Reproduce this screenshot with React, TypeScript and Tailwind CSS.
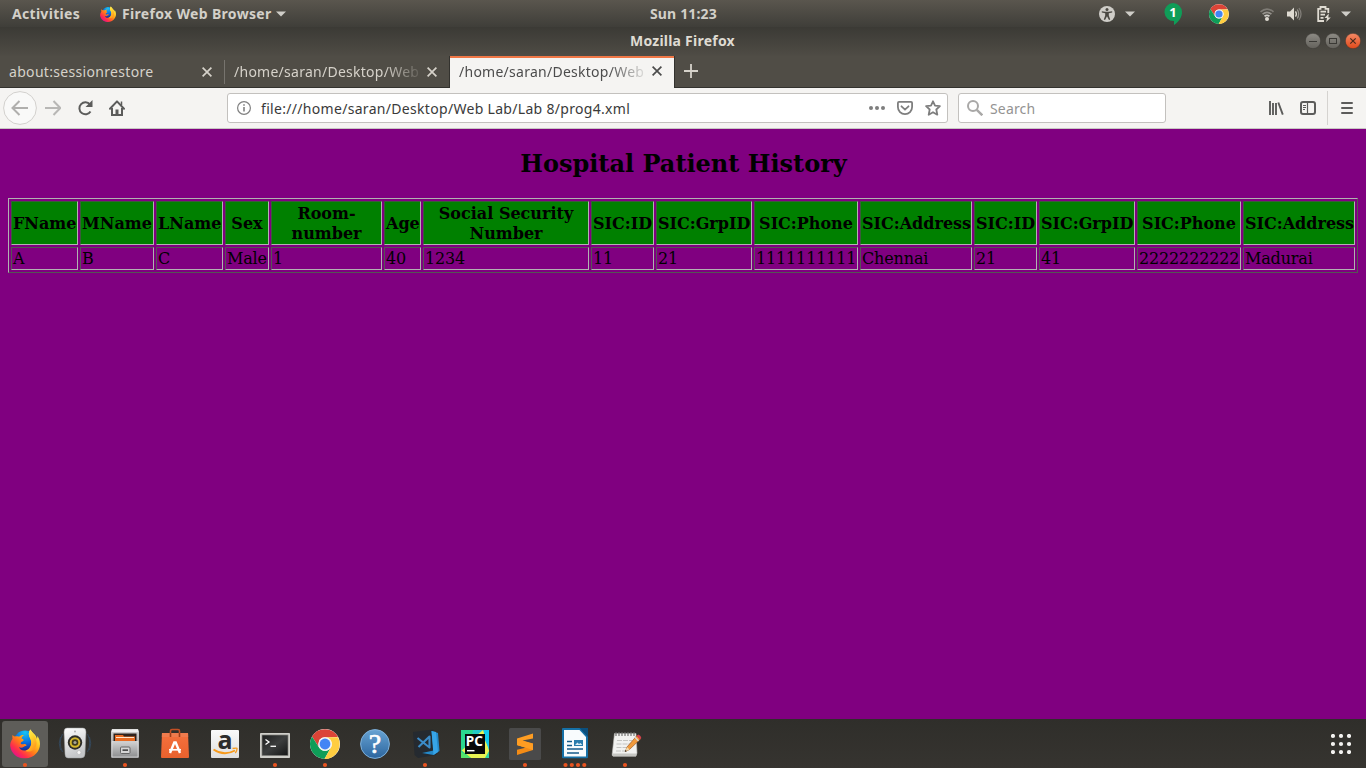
import React from "react";

type IconProps = { className?: string };

const UI = "font-['Noto_Sans','Open_Sans',sans-serif]";

function FirefoxLogo({ className }: IconProps) {
  return (
    <svg viewBox="0 0 30 30" className={className}>
      <defs>
        <linearGradient id="fxBody" x1="0.85" y1="0.1" x2="0.15" y2="0.9">
          <stop offset="0" stopColor="#fff44f" />
          <stop offset="0.3" stopColor="#ffbd1c" />
          <stop offset="0.55" stopColor="#ff7a1a" />
          <stop offset="0.8" stopColor="#ff2f4a" />
          <stop offset="1" stopColor="#e3128a" />
        </linearGradient>
        <radialGradient id="fxGlobe" cx="0.5" cy="0.1" r="0.9">
          <stop offset="0" stopColor="#16c5f4" />
          <stop offset="0.5" stopColor="#0a6fe0" />
          <stop offset="1" stopColor="#20167c" />
        </radialGradient>
        <linearGradient id="fxTail" x1="0" y1="0" x2="0.5" y2="1">
          <stop offset="0" stopColor="#fff36b" />
          <stop offset="0.5" stopColor="#ffd52e" />
          <stop offset="1" stopColor="#ff9a1f" />
        </linearGradient>
      </defs>
      <circle cx="15" cy="13" r="11" fill="url(#fxGlobe)" />
      <path
        d="M2.6 6.2C2.2 7.6 2.2 9 2.5 10.2C1 12.500 0 15 .2 17.500C1 25 7.500 30.500 15.500 30C24 29.400 30 23 30 15.500C30 12 28.800 9 27.300 7.400C27.300 8.600 27.200 9.600 26.800 10.300C26.600 6.500 22.500 4.500 20.300 1C18.400 3.600 18.300 6.900 20 9.600C22.800 14.500 21 20.800 15.500 22C12 22.600 9.500 20.500 9.100 18.600C10.500 19.600 12.500 19.200 13.800 18.200C15 17.400 16 17.700 16.500 17.100C16.700 16.500 15.600 15.300 14.100 15.600C12.800 15.900 11.600 16.100 10.700 14.900C10.600 13.700 11.800 13.200 13.500 12.200C13.900 11 13 10.300 11.500 10C12 8 13 7.400 14.200 6.600C12.200 6.400 10.200 7 9.100 8.200C7.300 7.700 6.200 7.700 5 8.100C3.900 7.700 3 7.100 2.600 6.200Z"
        fill="url(#fxBody)"
      />
      <path
        d="M20.300 1C18.400 3.600 18.300 6.900 20 9.600C22.800 14.500 21 20.800 15.500 22.500C21 24.500 26 21 26.500 15C26.800 9 22.500 4.500 20.300 1Z"
        fill="url(#fxTail)"
      />
    </svg>
  );
}

function ChromeLogo({ className }: IconProps) {
  return (
    <svg viewBox="0 0 30 30" className={className}>
      <circle cx="15" cy="15" r="15" fill="#fff" />
      <path d="M2 7.500A15 15 0 0 1 28 8L21 8.300L15 8.200A6.800 6.800 0 0 0 9.100 11.600L8.500 17.500Z" fill="#db4437" />
      <path d="M2 7.500A15 15 0 0 0 14.500 30L20.900 18.400A6.800 6.800 0 0 1 9.100 18.400Z" fill="#0f9d58" />
      <path d="M28 8.200A15 15 0 0 1 14.500 30L20.900 18.400A6.800 6.800 0 0 0 15 8.200Z" fill="#ffcd40" />
      <circle cx="15" cy="15" r="6.800" fill="#f1f1f1" />
      <circle cx="15" cy="15" r="5.400" fill="#4285f4" />
    </svg>
  );
}

function Caret({ className }: IconProps) {
  return (
    <svg viewBox="0 0 10 6" className={className}>
      <path d="M0 .5H10L5 5.500Z" fill="#cfcdc8" />
    </svg>
  );
}

function TopBar() {
  return (
    <div className={`flex h-[27px] items-center bg-gradient-to-b from-[#5a564e] to-[#3f3e39] text-[14px] font-bold text-[#d3d0c9] ${UI}`}>
      <div className="ml-3 w-[88px] whitespace-nowrap tracking-[0.3px]">Activities</div>
      <FirefoxLogo className="h-4 w-4" />
      <div className="ml-[6px] w-[151px] whitespace-nowrap tracking-[0.33px]">Firefox Web Browser</div>
      <Caret className="ml-[3px] h-[6px] w-[10px]" />
      <div className="ml-[364px] w-[449px] whitespace-nowrap tracking-[0.15px]">Sun 11:23</div>
      <svg viewBox="0 0 16 16" className="h-4 w-4">
        <circle cx="8" cy="8" r="8" fill="#cfcdc8" />
        <circle cx="8" cy="3.500" r="1.500" fill="#4a4842" />
        <path d="M2.800 5.200L6.200 5.700H9.800L13.200 5.200V6.500L9.800 7.200V9.500L11.200 13.600L10 14L8 10.200L6 14L4.800 13.600L6.200 9.500V7.200L2.800 6.500Z" fill="#4a4842" />
      </svg>
      <Caret className="ml-[10px] h-[6px] w-[10px]" />
      <svg viewBox="0 0 18 22" className="ml-[29px] h-[22px] w-[18px]">
        <path d="M9 0A9 9 0 0 1 18 9C18 14.500 15 18.500 10 22V18A9 9 0 1 1 9 0Z" fill="#0f9d58" />
        <text x="9" y="13.500" textAnchor="middle" fontFamily="Noto Sans" fontSize="13" fontWeight="700" fill="#fff">1</text>
      </svg>
      <ChromeLogo className="ml-[27px] h-5 w-5" />
      <svg viewBox="0 0 16 16" className="ml-[30px] mt-px h-4 w-4" fill="none" strokeWidth="1.700">
        <path d="M1.500 5.800Q8 .3 14.500 5.800" stroke="#7e7b75" />
        <path d="M3.600 8.200Q8 4.500 12.400 8.200" stroke="#96938d" />
        <path d="M5.500 10.300Q8 8.400 10.500 10.300" stroke="#cfcdc8" />
        <circle cx="8" cy="13" r="2" fill="#dfdbd2" />
      </svg>
      <svg viewBox="0 0 16 16" className="ml-[11px] h-4 w-4" fill="none">
        <path d="M1 5.500H4L8 1.500V14.500L4 10.500H1Z" fill="#dfdbd2" />
        <path d="M9.500 5.300Q11.300 8 9.500 10.700" stroke="#dfdbd2" strokeWidth="1.300" />
        <path d="M11.300 3.500Q14 8 11.300 12.500" stroke="#96938d" strokeWidth="1.300" />
        <path d="M13 2Q17 8 13 14" stroke="#817e78" strokeWidth="1.300" />
      </svg>
      <svg viewBox="0 0 16 16" className="ml-[14px] h-4 w-4" fill="none" stroke="#dfdbd2" strokeWidth="1.800">
        <path d="M8 15H2.200V2.900H4.500V1H9.500V2.900H12.300V7" />
        <path d="M4.500 5.700H10M4.500 8.700H9M4.500 11.800H7.500" />
        <path d="M12.800 7.500L8.500 12H11L10.200 16L14.800 11.500H12.300Z" fill="#dfdbd2" stroke="none" />
      </svg>
      <Caret className="ml-[9px] h-[6px] w-[10px]" />
    </div>
  );
}

function TitleBar() {
  return (
    <div className={`flex h-[29px] bg-gradient-to-b from-[#3b3a35] to-[#4f4c45] text-[14px] font-bold text-[#dfdbd2] ${UI}`}>
      <div className="ml-[630px] w-[675px] whitespace-nowrap pt-1 leading-5 tracking-[0.23px]">Mozilla Firefox</div>
      <div className="flex gap-1 pt-[6px]">
        <svg viewBox="0 0 16 16" className="h-4 w-4">
          <defs>
            <linearGradient id="winGray" x2="0" y2="1">
              <stop stopColor="#8d8b85" />
              <stop offset="1" stopColor="#63615b" />
            </linearGradient>
            <linearGradient id="winRed" x2="0" y2="1">
              <stop stopColor="#f48a66" />
              <stop offset="1" stopColor="#e0491a" />
            </linearGradient>
          </defs>
          <circle cx="8" cy="8" r="7.700" fill="url(#winGray)" stroke="#34332f" strokeWidth=".5" />
          <path d="M4 8.500H12" stroke="#3a3935" />
        </svg>
        <svg viewBox="0 0 16 16" className="h-4 w-4">
          <circle cx="8" cy="8" r="7.700" fill="url(#winGray)" stroke="#34332f" strokeWidth=".5" />
          <rect x="4.500" y="5.500" width="7" height="5" fill="none" stroke="#3a3935" />
        </svg>
        <svg viewBox="0 0 16 16" className="h-4 w-4">
          <circle cx="8" cy="8" r="7.700" fill="url(#winRed)" stroke="#34332f" strokeWidth=".5" />
          <path d="M5.300 5.300L10.700 10.700M10.700 5.300L5.300 10.700" stroke="#4a2a1c" strokeWidth="1.200" />
        </svg>
      </div>
    </div>
  );
}

function CloseX({ className }: IconProps) {
  return (
    <svg viewBox="0 0 10 10" className={className} stroke="currentColor" strokeWidth="1.700" fill="none">
      <path d="M.6 .6L9.400 9.400M9.400 .6L.6 9.400" />
    </svg>
  );
}

function TabStrip() {
  return (
    <div className={`flex h-8 border-b border-[#33322e] bg-[#504d46] text-[14px] text-[#d6d2ca] ${UI}`}>
      <div className="flex w-[224px] items-center">
        <div className="ml-[9px] w-[193px] whitespace-nowrap tracking-[0.32px]">about:sessionrestore</div>
        <CloseX className="h-[10px] w-[10px]" />
      </div>
      <div className="mb-[3px] mt-1 w-px bg-[#77746e]" />
      <div className="flex w-[224px] items-center">
        <div className="ml-[9px] w-[193px] whitespace-nowrap tracking-[0.26px] [mask-image:linear-gradient(to_right,black_150px,transparent_191px)]">/home/saran/Desktop/Web</div>
        <CloseX className="h-[10px] w-[10px]" />
      </div>
      <div className="-mb-px flex w-[226px] items-center border-x border-[#33322e] bg-[#f5f4f2] pb-[2px] text-[#4c4c4c] shadow-[inset_0_2px_0_#f07746]">
        <div className="ml-[9px] w-[193px] whitespace-nowrap tracking-[0.26px] [mask-image:linear-gradient(to_right,black_150px,transparent_191px)]">/home/saran/Desktop/Web</div>
        <CloseX className="h-[10px] w-[10px]" />
      </div>
      <svg viewBox="0 0 14 14" className="ml-[9px] mt-2 h-[14px] w-[14px]" stroke="#d6d2ca" strokeWidth="1.800">
        <path d="M7 0V14M0 7H14" />
      </svg>
    </div>
  );
}

function Toolbar() {
  return (
    <div className={`flex h-[41px] items-center border-b border-[#c8c6c3] bg-[#f5f4f2] text-[14px] ${UI}`}>
      <svg viewBox="0 0 34 34" className="ml-[3px] h-[34px] w-[34px]" fill="none">
        <circle cx="17" cy="17" r="16.400" fill="#f9f9f8" stroke="#d2d0cd" />
        <path d="M25 17H10M16.500 10L9.500 17L16.500 24" stroke="#b0afad" strokeWidth="2" />
      </svg>
      <svg viewBox="0 0 16 16" className="ml-2 h-4 w-4" fill="none" stroke="#b8b7b5" strokeWidth="2">
        <path d="M0 8H15M8.500 1L15.300 8L8.500 15" />
      </svg>
      <svg viewBox="0 0 16 16" className="ml-4 h-4 w-4" fill="none" stroke="#5c5c5b" strokeWidth="2">
        <path d="M13.500 11.500A6 6 0 1 1 13 4.500" />
        <path d="M15.500 0V7H8.500Z" fill="#5c5c5b" stroke="none" />
      </svg>
      <svg viewBox="0 0 16 16" className="ml-4 h-4 w-4" fill="none" stroke="#5c5c5b" strokeWidth="2">
        <path d="M1 8.700L8 1.400L15 8.700" strokeLinejoin="round" strokeLinecap="round" />
        <path d="M3 8V14.900H13V8" />
        <path d="M8 14V9.500" strokeWidth="3" />
        <path d="M12.500 1.500V5" strokeWidth="1.500" />
      </svg>

      <div className="ml-[102px] flex h-[30px] w-[721px] items-center rounded-[3px] border border-[#c3c1be] bg-white">
        <svg viewBox="0 0 14 14" className="ml-[9px] h-[14px] w-[14px]" fill="none" stroke="#808080">
          <circle cx="7" cy="7" r="6.400" strokeWidth="1.200" />
          <path d="M7 6V10.500M7 3.200V4.800" strokeWidth="1.600" />
        </svg>
        <div className="ml-[10px] w-[608px] whitespace-nowrap tracking-[0.31px] text-[#3a3a3a]">file:///home/saran/Desktop/Web Lab/Lab 8/prog4.xml</div>
        <svg viewBox="0 0 16 4" className="h-1 w-4" fill="#7e7e7e">
          <circle cx="2" cy="2" r="2" />
          <circle cx="8" cy="2" r="2" />
          <circle cx="14" cy="2" r="2" />
        </svg>
        <svg viewBox="0 0 16 16" className="ml-3 h-4 w-4" fill="none" stroke="#7e7e7e" strokeWidth="1.800">
          <path d="M2 1.900H14Q15.100 1.900 15.100 3V7A7.100 7.100 0 0 1 .9 7V3Q.9 1.900 2 1.900Z" />
          <path d="M4.500 6.300L8 9.600L11.500 6.300" strokeLinecap="round" />
        </svg>
        <svg viewBox="0 0 16 16" className="ml-3 h-4 w-4" fill="none" stroke="#7e7e7e" strokeWidth="1.800" strokeLinejoin="round">
          <path d="M8 1.300L10 5.700L14.900 6.200L11.300 9.500L12.300 14.700L8 12.200L3.700 14.700L4.700 9.500L1.100 6.200L6 5.700Z" />
        </svg>
      </div>

      <div className="ml-[10px] flex h-[30px] w-[208px] items-center rounded-[3px] border border-[#c3c1be] bg-white">
        <svg viewBox="0 0 16 16" className="ml-2 h-4 w-4" fill="none" stroke="#a9a8a7" strokeWidth="2">
          <circle cx="6" cy="6" r="5" />
          <path d="M9.800 9.800L15.300 15.300" strokeWidth="2.400" />
        </svg>
        <div className="ml-[7px] whitespace-nowrap tracking-[0.15px] text-[#949392]">Search</div>
      </div>

      <svg viewBox="0 0 16 16" className="ml-[102px] h-4 w-4" stroke="#5c5c5b" strokeWidth="2">
        <path d="M2 1V15M5 3V15M8 3V15M10.300 2.500L14.800 14.700" strokeWidth="1.900" />
      </svg>
      <svg viewBox="0 0 16 16" className="ml-4 h-4 w-4" fill="none" stroke="#5c5c5b">
        <rect x="1" y="2" width="14" height="12" rx="2" strokeWidth="2" />
        <path d="M7.500 2V14" strokeWidth="1.200" />
        <path d="M3 5.500H6M3 7.500H6M3 9.500H5" strokeWidth="1" />
      </svg>
      <div className="ml-[11px] h-[34px] w-px bg-[#d5d3d0]" />
      <svg viewBox="0 0 12 12" className="ml-[13px] h-3 w-3" stroke="#5c5c5b" strokeWidth="2" strokeLinecap="round">
        <path d="M1 1H11M1 6H11M1 11H11" />
      </svg>
    </div>
  );
}

const columns: { head: React.ReactNode; value: string; width: string }[] = [
  { head: "FName", value: "A", width: "w-[67px]" },
  { head: "MName", value: "B", width: "w-[74px]" },
  { head: "LName", value: "C", width: "w-[67px]" },
  { head: "Sex", value: "Male", width: "w-[44px]" },
  { head: <>Room-<br />number</>, value: "1", width: "w-[111px]" },
  { head: "Age", value: "40", width: "w-[37px]" },
  { head: <>Social Security<br />Number</>, value: "1234", width: "w-[166px]" },
  { head: "SIC:ID", value: "11", width: "w-[63px]" },
  { head: "SIC:GrpID", value: "21", width: "w-[96px]" },
  { head: "SIC:Phone", value: "1111111111", width: "w-[104px]" },
  { head: "SIC:Address", value: "Chennai", width: "w-[112px]" },
  { head: "SIC:ID", value: "21", width: "w-[63px]" },
  { head: "SIC:GrpID", value: "41", width: "w-[96px]" },
  { head: "SIC:Phone", value: "2222222222", width: "w-[104px]" },
  { head: "SIC:Address", value: "Madurai", width: "w-[112px]" },
];

function PatientPage() {
  return (
    <main className="h-[590px] bg-[#800080] px-2 pt-5 font-['DejaVu_Serif',serif] text-base text-black">
      <h1 className="h-[49px] pl-px text-center text-[24px] font-bold leading-[29px]">Hospital Patient History</h1>
      <table className="w-[1350px] table-fixed border-separate border-spacing-[2px] border border-b-[#555555] border-l-[#b2b2b2] border-r-[#555555] border-t-[#b2b2b2]">
        <colgroup>
          {columns.map((c, i) => (
            <col key={i} className={c.width} />
          ))}
        </colgroup>
        <thead>
          <tr className="h-[44px]">
            {columns.map((c, i) => (
              <th key={i} className="whitespace-nowrap border border-b-[#b2b2b2] border-l-[#3c5a3c] border-r-[#b2b2b2] border-t-[#3c5a3c] bg-[#008000] px-px pb-0 pt-[2px] text-center align-middle font-bold leading-[20px]">
                {c.head}
              </th>
            ))}
          </tr>
        </thead>
        <tbody>
          <tr className="h-[23px]">
            {columns.map((c, i) => (
              <td key={i} className="whitespace-nowrap border border-b-[#b2b2b2] border-l-[#555555] border-r-[#b2b2b2] border-t-[#555555] p-px align-middle leading-[19px] tracking-[-0.15px]">
                {c.value}
              </td>
            ))}
          </tr>
        </tbody>
      </table>
    </main>
  );
}

function DockIcon({ dots = [], active = false, children }: { dots?: number[]; active?: boolean; children: React.ReactNode }) {
  return (
    <svg viewBox="0 0 50 49" className="h-[49px] w-[50px] shrink-0">
      {active && <rect x="2" y="2" width="46" height="46" rx="3" fill="#5e5d59" />}
      {children}
      {dots.map((x) => (
        <circle key={x} cx={x} cy="46" r="2.100" fill="#e95420" />
      ))}
    </svg>
  );
}

function Dock() {
  return (
    <div className="flex h-[49px] items-center bg-[#33322e] bg-gradient-to-b from-[#2f2e2a] to-[#363430]">
      <DockIcon active dots={[25]}>
        <svg x="10" y="9.500" width="30" height="30" viewBox="0 0 30 30">
          <FirefoxLogo />
        </svg>
      </DockIcon>

      <DockIcon>
        <defs>
          <linearGradient id="speaker" x2="0.3" y2="1">
            <stop stopColor="#ffffff" />
            <stop offset="1" stopColor="#c4c6c8" />
          </linearGradient>
        </defs>
        <g fill="none" stroke="#34475a" strokeWidth="1">
          <path d="M12.500 15Q8 24 12.500 33M10.500 18Q8 24 10.500 31M37.500 15Q42 24 37.500 33M39.500 18Q42 24 39.500 31" />
        </g>
        <path d="M17 9H33Q36 9 36 13L35 35Q35 39 31 39H18Q15 39 15 35L14 13Q14 9 17 9Z" fill="url(#speaker)" stroke="#9a9c9e" strokeWidth=".5" />
        <circle cx="25" cy="23.500" r="7.200" fill="#2d2d2a" />
        <circle cx="25" cy="23.500" r="5.300" fill="#d3b62c" />
        <circle cx="25" cy="23.500" r="3.300" fill="#3c391f" />
        <circle cx="25" cy="23.500" r="1.600" fill="#a6a494" />
        <circle cx="29" cy="33.500" r="2" fill="#f5f5f5" stroke="#b5b5b5" strokeWidth=".6" />
        <circle cx="25" cy="12.500" r="1" fill="#b0b0b0" />
      </DockIcon>

      <DockIcon dots={[25]}>
        <defs>
          <linearGradient id="cabinet" x2="0" y2="1">
            <stop stopColor="#d2d2d2" />
            <stop offset="1" stopColor="#8e8f90" />
          </linearGradient>
        </defs>
        <path d="M12 10H38L39 13V38Q39 39 38 39H12Q11 39 11 38V13Z" fill="url(#cabinet)" />
        <path d="M12 10.500H38L38.500 13H11.500Z" fill="#efefef" />
        <rect x="13.500" y="14.500" width="23" height="8" fill="#30231d" />
        <path d="M15 16H23L24 17.500H35V22H15Z" fill="#e86b22" />
        <path d="M16 18.500H34" stroke="#ffe6cd" strokeWidth="1" />
        <path d="M12 22.500H38V38H12Z" fill="url(#cabinet)" stroke="#e2e2e2" strokeWidth=".7" />
        <rect x="20.500" y="28" width="9.500" height="6.500" rx="1" fill="#d5d5d5" stroke="#656565" />
        <rect x="22.500" y="30.300" width="5.500" height="1.700" fill="#4c4c4c" />
      </DockIcon>

      <DockIcon>
        <defs>
          <linearGradient id="bag" x2="0" y2="1">
            <stop stopColor="#f4713e" />
            <stop offset="1" stopColor="#e9612d" />
          </linearGradient>
        </defs>
        <path d="M20.500 18V12Q20.500 10.500 22 10.500H28Q29.500 10.500 29.500 12V18" fill="none" stroke="#c44f24" strokeWidth="1.600" />
        <path d="M12 14H38L39 38Q39 39 38 39H12Q11 39 11 38Z" fill="url(#bag)" />
        <path d="M12 14H38L38.200 18H11.800Z" fill="#ef7b4d" />
        <path d="M20.500 14V18M29.500 14V18" stroke="#9d3c18" strokeWidth="1.600" />
        <path d="M20 34L24.300 23.500H25.700L30 34" fill="none" stroke="#fff" strokeWidth="2.400" />
        <path d="M19 30.800H31" stroke="#fff" strokeWidth="1.700" />
      </DockIcon>

      <DockIcon>
        <defs>
          <linearGradient id="amazonTile" x2="0" y2="1">
            <stop stopColor="#fafafa" />
            <stop offset="1" stopColor="#dedede" />
          </linearGradient>
        </defs>
        <rect x="11" y="11" width="28" height="28" rx="1" fill="url(#amazonTile)" />
        <text x="25" y="29.500" textAnchor="middle" fontFamily="Open Sans" fontSize="25" fontWeight="700" fill="#2c2c2c">a</text>
        <path d="M13.500 30.500Q24 37.500 35 31.500" fill="none" stroke="#f79a1c" strokeWidth="1.800" />
        <path d="M32.500 29.500Q37.500 28.500 37 29.800Q37 32 35.300 34" fill="none" stroke="#f79a1c" strokeWidth="1.300" />
      </DockIcon>

      <DockIcon dots={[25]}>
        <defs>
          <linearGradient id="termScreen" x2="1" y2="1">
            <stop stopColor="#1c1d1d" />
            <stop offset=".5" stopColor="#3c3e3e" />
            <stop offset="1" stopColor="#151616" />
          </linearGradient>
        </defs>
        <rect x="10" y="14" width="30" height="25" rx=".8" fill="#cfcfca" />
        <rect x="12" y="16" width="26" height="20.500" fill="url(#termScreen)" stroke="#7e7e7a" strokeWidth=".7" />
        <path d="M15.500 20.500L19 23L15.500 25.500" stroke="#fff" strokeWidth="1.300" fill="none" />
        <path d="M20.500 27.300H26" stroke="#fff" strokeWidth="1.300" />
      </DockIcon>

      <DockIcon dots={[25]}>
        <svg x="10" y="10" width="30" height="30" viewBox="0 0 30 30">
          <ChromeLogo />
        </svg>
      </DockIcon>

      <DockIcon>
        <defs>
          <linearGradient id="help" x2="0" y2="1">
            <stop stopColor="#67a3d3" />
            <stop offset="1" stopColor="#2c659e" />
          </linearGradient>
        </defs>
        <circle cx="25" cy="25" r="14.400" fill="url(#help)" stroke="#7eb0da" strokeWidth="1" />
        <text x="25" y="34" textAnchor="middle" fontFamily="Liberation Serif" fontSize="28" fill="#fff" stroke="#fff" strokeWidth=".6">?</text>
      </DockIcon>

      <DockIcon dots={[25]}>
        <path d="M13 13L33 10.500L39 33L36 36L18 39L14.500 36Z" fill="#252a30" />
        <path d="M31.500 12L38 14L39.500 32L33.500 36L22 34L33.500 31.500Z" fill="#2489ca" />
        <path d="M31.500 12L36 13L38 33L33.500 36Z" fill="#37a5e8" />
        <path d="M17.500 19L29.500 28.500V17.500L18.500 28" fill="none" stroke="#3b8cc9" strokeWidth="2.100" strokeLinejoin="round" />
      </DockIcon>

      <DockIcon>
        <defs>
          <linearGradient id="pycharm" x1="0" y1="1" x2="1" y2="0">
            <stop stopColor="#2ad582" />
            <stop offset=".5" stopColor="#32d6a1" />
            <stop offset="1" stopColor="#15bdf2" />
          </linearGradient>
        </defs>
        <rect x="11" y="11" width="28" height="28" fill="url(#pycharm)" />
        <path d="M11 31L26 17L33 11L35 17L39 32L35 39H21Z" fill="#e8f252" />
        <path d="M11 11H23L20 24L11 32Z" fill="#2bd88e" />
        <path d="M11 33L21 39H11Z" fill="#55e36a" />
        <path d="M34 11H39V30L34 19Z" fill="#13c9ef" />
        <rect x="15" y="15" width="20" height="20" fill="#080808" />
        <text x="15.800" y="26.500" fontFamily="Noto Sans" fontSize="13.500" fontWeight="700" fill="#fff">PC</text>
        <path d="M17 31.700H24.500" stroke="#fff" strokeWidth="1.500" />
      </DockIcon>

      <DockIcon dots={[25]}>
        <rect x="9" y="9" width="32" height="32" rx="1.500" fill="#4a4a4a" />
        <path d="M33 14.500L17 19.500V26L33 31V24.500L22.500 21.500L33 19.500Z" fill="#ff9d22" />
        <path d="M17 26L33 24.500V31L17 36V30.800L26.500 28.500Z" fill="#f58c15" />
        <path d="M17 20L33 25V31L17 26Z" fill="#ff9d22" />
      </DockIcon>

      <DockIcon dots={[15.5, 21.8, 28, 34.3]}>
        <path d="M12 9.500Q12 9 13 9H31L38 17V38Q38 39.300 37 39.300H13Q12 39.300 12 38Z" fill="#1570a7" />
        <path d="M14 11H29.500L36 18V37.500H14Z" fill="#f8fbfd" />
        <path d="M29.500 9H38V18Z" fill="#0b4f7d" />
        <path d="M17 22.500H22M17 26.500H22M17 30H33M17 34H29" stroke="#145b8a" strokeWidth="1.600" />
        <rect x="24" y="21" width="9" height="6" fill="#2a7cad" />
        <path d="M25 26L27.500 23.500L29 25L30.500 24L32.300 26Z" fill="#d8ebf5" />
      </DockIcon>

      <DockIcon dots={[25]}>
        <path d="M14.500 14.500H36L37 34L36 37H13Q12 37 12.200 35Z" fill="#f2f2f0" stroke="#bdbdba" strokeWidth=".6" />
        <path d="M12.300 34.500H36.500L36 37.500H13Z" fill="#c6c6c2" />
        <path d="M17 21.500H32M16.500 25H31M16.500 28.500H28M16 32H26" stroke="#b7b7b5" strokeWidth=".8" strokeDasharray="5 1" />
        <path d="M16 13V17M19 13V17M22 13V17M25 13V17M28 13V17M31 13V17M34 13V17" stroke="#686866" strokeWidth="1.100" />
        <path d="M37 16.500L40.500 20L29.500 30.500L25.300 32.500L27 28Z" fill="#f19a3c" stroke="#8f4e18" strokeWidth=".6" />
        <path d="M36.500 17L40 20.500L41.300 19Q41 16.500 38.500 15.500Z" fill="#d8434c" />
        <path d="M35 18.300L38.500 22" stroke="#dadada" strokeWidth="1.300" />
        <path d="M27 28L25.300 32.500L29.500 30.500Z" fill="#f5dbaa" />
        <circle cx="25.700" cy="32" r=".8" fill="#332b25" />
      </DockIcon>

      <svg viewBox="0 0 20 20" className="ml-auto mr-[15px] h-5 w-5" fill="#f4f3f1">
        {[2, 10, 18].map((y) => [2, 10, 18].map((x) => <circle key={`${x}-${y}`} cx={x} cy={y} r="2.100" />))}
      </svg>
    </div>
  );
}

export default function App() {
  return (
    <div className="flex h-[768px] w-[1366px] flex-col overflow-hidden bg-[#800080]">
      <TopBar />
      <TitleBar />
      <TabStrip />
      <Toolbar />
      <PatientPage />
      <Dock />
    </div>
  );
}
